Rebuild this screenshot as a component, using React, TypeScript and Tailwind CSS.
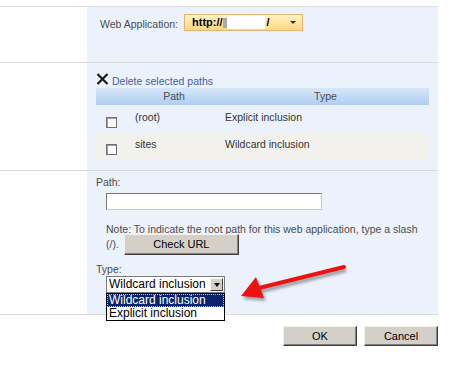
const font = { fontFamily: '"Liberation Sans", Arial, sans-serif' };

function Checkbox() {
  return <div className="w-[11px] h-[11px] border border-[#707070] bg-white shadow-[inset_1px_1px_0_#a0a0a0]" />;
}

function Btn({ label, className }: { label: string; className: string }) {
  return (
    <div
      className={`flex items-center justify-center bg-[#d4d0c8] border border-t-[#f4f2ee] border-l-[#f4f2ee] border-r-[#404040] border-b-[#404040] shadow-[inset_-1px_-1px_0_#808080] text-[11px] text-black ${className}`}
    >
      {label}
    </div>
  );
}

export default function App() {
  return (
    <div className="w-[450px] h-[390px] bg-white text-[10.5px] text-[#4c4c4c] overflow-hidden" style={font}>
      <div className="h-[6px]" />
      <div className="w-[438px] border-t border-[#dcdcdc]">
        {/* web application */}
        <div className="flex h-[55px]">
          <div className="w-[87px]" />
          <div className="flex-1 bg-[#ebf2fc] flex items-start pt-[7px] pl-[13px]">
            <span className="mt-[3px]">Web Application:</span>
            <div className="ml-[6px] w-[119px] h-[17px] border border-[#e1b572] bg-gradient-to-b from-[#fff2c2] to-[#ffd77e] flex items-center pl-[7px] text-[11px] font-bold text-black">
              <span>http://</span>
              <span className="w-[4px] h-[10px] bg-[#aaa]" />
              <span className="w-[38px] h-[13px] bg-white" />
              <span className="ml-[2px]">/</span>
              <span className="ml-auto mr-[6px] w-0 h-0 border-l-[3px] border-r-[3px] border-t-[3px] border-l-transparent border-r-transparent border-t-[#333]" />
            </div>
          </div>
        </div>
        <div className="border-t border-[#dadada]" />
        {/* paths list */}
        <div className="flex h-[107px]">
          <div className="w-[87px]" />
          <div className="flex-1 bg-[#ebf2fc] pl-[9px] pr-[9px] pt-[8px]">
            <div className="flex items-end h-[16px]">
              <svg width="13" height="12" viewBox="0 0 13 12" className="mb-[2px]">
                <path d="M1.5 1 L11.5 11 M11.5 1 L1.5 11" stroke="#1a1a1a" strokeWidth="2.2" />
              </svg>
              <span className="ml-[3px] text-[#3d62a8] leading-none mb-[1px]">Delete selected paths</span>
            </div>
            <div className="mt-[1px] h-[17px] flex items-center bg-gradient-to-b from-[#d6e6f9] to-[#b0cdf2] text-[#4c4c4c]">
              <span className="w-[156px] text-center">Path</span>
              <span className="flex-1 text-center pr-[30px]">Type</span>
            </div>
            <div className="h-[29px] flex items-center text-[#333]">
              <div className="w-[39px] pl-[10px] pt-[5px]"><Checkbox /></div>
              <span className="w-[90px] mb-[3px]">(root)</span>
              <span className="mb-[3px]">Explicit inclusion</span>
            </div>
            <div className="h-[25px] flex items-center bg-[#f3f1ec] text-[#333]">
              <div className="w-[39px] pl-[10px] pt-[5px]"><Checkbox /></div>
              <span className="w-[90px] mb-[4px]">sites</span>
              <span className="mb-[4px]">Wildcard inclusion</span>
            </div>
          </div>
        </div>
        <div className="border-t border-[#dadada]" />
        {/* add path */}
        <div className="flex h-[143px]">
          <div className="w-[87px]" />
          <div className="flex-1 bg-[#ebf2fc] pl-[9px] pt-[5px] relative leading-[13px]">
            <div>Path:</div>
            <div className="ml-[10px] mt-[4px] w-[216px] h-[17px] bg-white border border-[#7a7a7a] border-r-[#c8c8c8] border-b-[#c8c8c8]" />
            <div className="ml-[10px] mt-[13px] leading-[12px]">
              Note: To indicate the root path for this web application, type a slash
            </div>
            <div className="ml-[10px] -mt-[1px] flex items-center">
              <span>(/).</span>
              <Btn label="Check URL" className="ml-[5px] w-[115px] h-[21px]" />
            </div>
            <div className="mt-[8px]">Type:</div>
            <div className="ml-[10px] w-[119px] h-[17px] border border-[#7a7a7a] bg-white flex items-center text-[12px] text-black pl-[2px]">
              <span>Wildcard inclusion</span>
              <div className="ml-auto mr-[1px] w-[13px] h-[13px] bg-[#d4d0c8] border border-t-white border-l-white border-r-[#404040] border-b-[#404040] flex items-center justify-center">
                <span className="w-0 h-0 border-l-[3px] border-r-[3px] border-t-[4px] border-l-transparent border-r-transparent border-t-black" />
              </div>
            </div>
            <div className="absolute left-[19px] top-[122px] w-[119px] border border-black bg-white text-[12px] text-black leading-[13px] z-10">
              <div className="bg-[#0a246a] text-white pl-[2px] outline outline-1 outline-dotted outline-[#f0c060] -outline-offset-1">Wildcard inclusion</div>
              <div className="pl-[2px]">Explicit inclusion</div>
            </div>
            <svg className="absolute left-[150px] top-[89px]" width="115" height="45" viewBox="0 0 115 45">
              <defs>
                <filter id="sh" x="-20%" y="-40%" width="140%" height="180%">
                  <feGaussianBlur stdDeviation="1.6" />
                </filter>
              </defs>
              <g transform="translate(2,3)" opacity="0.35" filter="url(#sh)">
                <path d="M107 7 L22 28" stroke="#000" strokeWidth="4" />
                <path d="M4 36 L19 17 L27 38 Z" fill="#000" />
              </g>
              <path d="M107 7 L22 28" stroke="#ee1111" strokeWidth="4" strokeLinecap="round" />
              <path d="M4 36 L19 17 L27 38 Z" fill="#ee1111" />
            </svg>
          </div>
        </div>
        <div className="border-t border-[#dadada]" />
      </div>
      <div className="w-[438px] flex justify-end gap-[7px] mt-[11px]">
        <Btn label="OK" className="w-[74px] h-[20px]" />
        <Btn label="Cancel" className="w-[74px] h-[20px]" />
      </div>
    </div>
  );
}
